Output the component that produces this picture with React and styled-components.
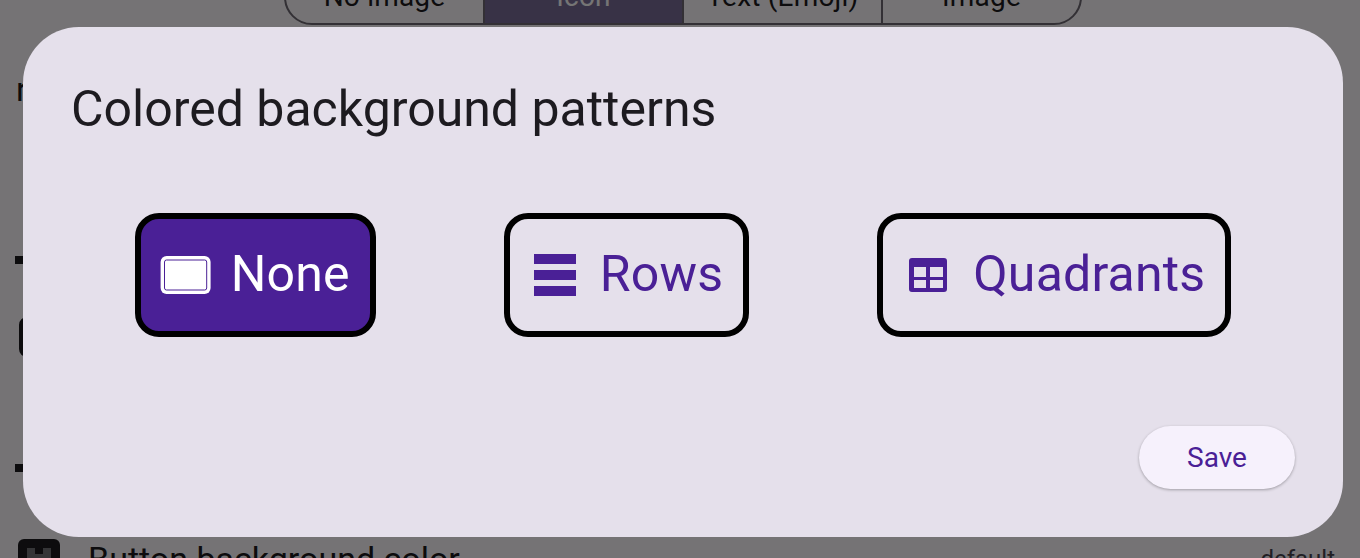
import React from 'react';
import styled, { createGlobalStyle } from 'styled-components';

const Global = createGlobalStyle`
  html, body { margin: 0; padding: 0; background: #fefaff; }
  body { font-family: Roboto, "Noto Sans", sans-serif; color: #1d1b20; }
`;

const Screen = styled.div`
  position: relative;
  width: 1360px;
  height: 558px;
  overflow: hidden;
`;

/* the settings page behind the dialog, scrolled so its top is cut off */
const Page = styled.div`
  display: flex;
  flex-direction: column;
  margin-top: -31px;
  padding: 0 25px 0 16px;
`;

const Segments = styled.div`
  display: flex;
  align-self: flex-start;
  margin-left: 268px;
  width: 798px;
  height: 56px;
  box-sizing: border-box;
  border: 2px solid #6f6a74;
  border-radius: 30px;
  overflow: hidden;
`;

const Segment = styled.div`
  flex: 1;
  display: flex;
  align-items: center;
  justify-content: center;
  padding-bottom: 2px;
  font-size: 28px;
  letter-spacing: 0.2px;
  background: ${p => (p.$active ? '#7a6d9a' : 'transparent')};
  color: ${p => (p.$active ? '#fff' : '#1d1b20')};
  border-left: ${p => (p.$first ? 'none' : '2px solid #6f6a74')};
`;

const HintLetter = styled.div`
  margin-top: 44px;
  height: 40px;
  font-size: 34px;
  line-height: 40px;
`;

const Dot = styled.div`
  width: 8px;
  height: 8px;
  margin-top: ${p => p.$top}px;
  margin-left: -1px;
  background: #1d1b20;
`;

const Chip = styled.div`
  width: 40px;
  height: 40px;
  margin-top: 53px;
  margin-left: 3px;
  border: 4px solid #1d1b20;
  border-radius: 8px;
  box-sizing: border-box;
`;

const SettingRow = styled.div`
  display: flex;
  align-items: flex-start;
  margin-top: 67px;
  margin-left: 2px;
`;

const SettingIcon = styled.div`
  flex: none;
  width: 42px;
  height: 42px;
  border-radius: 6px;
  background: #1d1b20;
`;

const SettingGlyph = styled.svg`
  display: block;
`;

const SettingLabel = styled.div`
  margin-left: 28px;
  font-size: 34px;
  line-height: 40px;
`;

const SettingValue = styled.div`
  margin-left: auto;
  margin-top: 4px;
  font-size: 24px;
  line-height: 32px;
  color: #49454f;
`;

const Scrim = styled.div`
  position: absolute;
  inset: 0;
  background: rgba(0, 0, 0, 0.54);
`;

const Dialog = styled.div`
  position: absolute;
  left: 23px;
  top: 27px;
  width: 1320px;
  height: 510px;
  box-sizing: border-box;
  padding: 50px 48px 48px;
  display: flex;
  flex-direction: column;
  background: #e5e0eb;
  border-radius: 56px;
`;

const Title = styled.h1`
  margin: 0;
  font-size: 50px;
  font-weight: 400;
  line-height: 64px;
  color: #1d1b20;
`;

const Options = styled.div`
  display: flex;
  justify-content: center;
  gap: 128px;
  margin-top: 72px;
`;

const Option = styled.button`
  display: flex;
  align-items: center;
  gap: 15px;
  height: 124px;
  box-sizing: border-box;
  padding: 0 20px 2px 15px;
  border: 6px solid #000;
  border-radius: 24px;
  background: ${p => (p.$selected ? '#4a2096' : 'transparent')};
  color: ${p => (p.$selected ? '#fff' : '#4a2096')};
  font-family: inherit;
  font-size: 50px;
  letter-spacing: 0.2px;
  line-height: 56px;
`;

const OptionIcon = styled.svg`
  display: block;
  flex: none;
  width: 60px;
  height: 60px;
  margin-top: 2px;
`;

const Actions = styled.div`
  margin-top: auto;
  display: flex;
  justify-content: flex-end;
`;

const SaveButton = styled.button`
  width: 156px;
  height: 63px;
  border: none;
  border-radius: 32px;
  background: #f6f1fc;
  color: #4a2096;
  font-family: inherit;
  font-size: 28px;
  box-shadow: 0 1px 3px rgba(0, 0, 0, 0.3);
`;

const NoneIcon = () => (
  <OptionIcon viewBox="0 0 60 60">
    <rect x="4.6" y="11" width="50" height="38" rx="6" fill="#fff" />
    <rect x="8.5" y="15" width="42.2" height="30" rx="2" fill="#fff" stroke="#4a2096" strokeWidth="1" />
  </OptionIcon>
);

const RowsIcon = () => (
  <OptionIcon viewBox="0 0 60 60" fill="#4a2096">
    <rect x="9" y="9" width="42" height="10" />
    <rect x="9" y="25" width="42" height="10" />
    <rect x="9" y="41" width="42" height="10" />
  </OptionIcon>
);

const QuadrantsIcon = () => (
  <OptionIcon viewBox="0 0 60 60">
    <path
      fill="#4a2096"
      fillRule="evenodd"
      d="M14 13h32a3 3 0 0 1 3 3v28a3 3 0 0 1-3 3H14a3 3 0 0 1-3-3V16a3 3 0 0 1 3-3zM16 22v10h12V22zM32 22v10h13V22zM16 35v8h12v-8zM32 35v8h13v-8z"
    />
  </OptionIcon>
);

const options = [
  { label: 'None', Icon: NoneIcon, selected: true },
  { label: 'Rows', Icon: RowsIcon },
  { label: 'Quadrants', Icon: QuadrantsIcon },
];

export default function App() {
  return (
    <Screen>
      <Global />
      <Page>
        <Segments>
          <Segment $first>No image</Segment>
          <Segment $active>Icon</Segment>
          <Segment>Text (Emoji)</Segment>
          <Segment>Image</Segment>
        </Segments>
        <HintLetter>r</HintLetter>
        <Dot $top={147} />
        <Chip />
        <Dot $top={107} />
        <SettingRow>
          <SettingIcon>
            <SettingGlyph width="42" height="42" viewBox="0 0 42 42">
              <path fill="#757378" d="M9 9h8v6h8V9h8v24h-8v-9h-8v9H9z" />
            </SettingGlyph>
          </SettingIcon>
          <SettingLabel>Button background color</SettingLabel>
          <SettingValue>default</SettingValue>
        </SettingRow>
      </Page>
      <Scrim />
      <Dialog>
        <Title>Colored background patterns</Title>
        <Options>
          {options.map(({ label, Icon, selected }) => (
            <Option key={label} $selected={selected}>
              <Icon />
              {label}
            </Option>
          ))}
        </Options>
        <Actions>
          <SaveButton>Save</SaveButton>
        </Actions>
      </Dialog>
    </Screen>
  );
}
